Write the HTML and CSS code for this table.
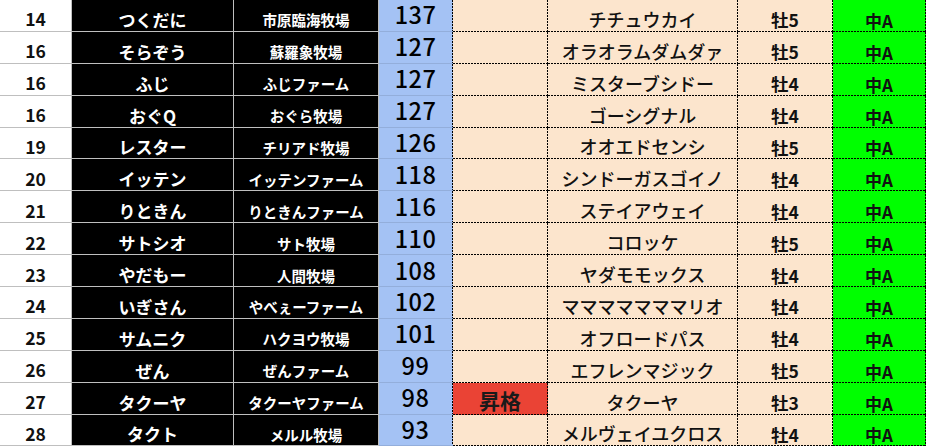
FILE: index.html
```html
<!DOCTYPE html>
<html lang="ja">
<head>
<meta charset="utf-8">
<title>ランキング</title>
<link rel="stylesheet" href="styles.css">
</head>
<body>
<div class="sheet">
  <div class="row"><div class="c rank">14</div><div class="c name">つくだに</div><div class="c farm">市原臨海牧場</div><div class="c pt">137</div><div class="c d note"></div><div class="c d horse">チチュウカイ</div><div class="c d sex">牡5</div><div class="c d cls">中A</div></div>
  <div class="row"><div class="c rank">16</div><div class="c name">そらぞう</div><div class="c farm">蘇羅象牧場</div><div class="c pt">127</div><div class="c d note"></div><div class="c d horse">オラオラムダムダァ</div><div class="c d sex">牡5</div><div class="c d cls">中A</div></div>
  <div class="row"><div class="c rank">16</div><div class="c name">ふじ</div><div class="c farm">ふじファーム</div><div class="c pt">127</div><div class="c d note"></div><div class="c d horse">ミスターブシドー</div><div class="c d sex">牡4</div><div class="c d cls">中A</div></div>
  <div class="row"><div class="c rank">16</div><div class="c name">おぐQ</div><div class="c farm">おぐら牧場</div><div class="c pt">127</div><div class="c d note"></div><div class="c d horse">ゴーシグナル</div><div class="c d sex">牡4</div><div class="c d cls">中A</div></div>
  <div class="row"><div class="c rank">19</div><div class="c name">レスター</div><div class="c farm">チリアド牧場</div><div class="c pt">126</div><div class="c d note"></div><div class="c d horse">オオエドセンシ</div><div class="c d sex">牡5</div><div class="c d cls">中A</div></div>
  <div class="row"><div class="c rank">20</div><div class="c name">イッテン</div><div class="c farm">イッテンファーム</div><div class="c pt">118</div><div class="c d note"></div><div class="c d horse">シンドーガスゴイノ</div><div class="c d sex">牡4</div><div class="c d cls">中A</div></div>
  <div class="row"><div class="c rank">21</div><div class="c name">りときん</div><div class="c farm">りときんファーム</div><div class="c pt">116</div><div class="c d note"></div><div class="c d horse">ステイアウェイ</div><div class="c d sex">牡4</div><div class="c d cls">中A</div></div>
  <div class="row"><div class="c rank">22</div><div class="c name">サトシオ</div><div class="c farm">サト牧場</div><div class="c pt">110</div><div class="c d note"></div><div class="c d horse">コロッケ</div><div class="c d sex">牡5</div><div class="c d cls">中A</div></div>
  <div class="row"><div class="c rank">23</div><div class="c name">やだもー</div><div class="c farm">人間牧場</div><div class="c pt">108</div><div class="c d note"></div><div class="c d horse">ヤダモモックス</div><div class="c d sex">牡4</div><div class="c d cls">中A</div></div>
  <div class="row"><div class="c rank">24</div><div class="c name">いぎさん</div><div class="c farm">やべぇーファーム</div><div class="c pt">102</div><div class="c d note"></div><div class="c d horse">マママママママリオ</div><div class="c d sex">牡4</div><div class="c d cls">中A</div></div>
  <div class="row"><div class="c rank">25</div><div class="c name">サムニク</div><div class="c farm">ハクヨウ牧場</div><div class="c pt">101</div><div class="c d note"></div><div class="c d horse">オフロードパス</div><div class="c d sex">牡4</div><div class="c d cls">中A</div></div>
  <div class="row"><div class="c rank">26</div><div class="c name">ぜん</div><div class="c farm">ぜんファーム</div><div class="c pt">99</div><div class="c d note"></div><div class="c d horse">エフレンマジック</div><div class="c d sex">牡5</div><div class="c d cls">中A</div></div>
  <div class="row"><div class="c rank">27</div><div class="c name">タクーヤ</div><div class="c farm">タクーヤファーム</div><div class="c pt">98</div><div class="c d note up">昇格</div><div class="c d horse">タクーヤ</div><div class="c d sex">牡3</div><div class="c d cls">中A</div></div>
  <div class="row"><div class="c rank">28</div><div class="c name">タクト</div><div class="c farm">メルル牧場</div><div class="c pt">93</div><div class="c d note"></div><div class="c d horse">メルヴェイユクロス</div><div class="c d sex">牡4</div><div class="c d cls">中A</div></div>
</div>
</body>
</html>
```

FILE: styles.css
```css
html, body {
  margin: 0;
  padding: 0;
  background: #ffffff;
}

body {
  font-family: "Noto Sans CJK JP", sans-serif;
  overflow: hidden;
}

.sheet {
  display: flex;
  flex-direction: column;
  width: 927px;
}

.row {
  display: grid;
  grid-template-columns: 72px 162px 145px 74px 95px 190px 95px 93px;
  height: 31.9px;
}

.c {
  box-sizing: border-box;
  display: flex;
  align-items: flex-end;
  justify-content: center;
  line-height: 1;
  white-space: nowrap;
  padding-bottom: 3px;
  border-right: 1px solid #bfbfbf;
  border-bottom: 1px solid #bfbfbf;
}

.rank {
  background: #ffffff;
  color: #111111;
  font-size: 17.5px;
  font-weight: 700;
}

.name {
  background: #000000;
  color: #ffffff;
  font-size: 17px;
  font-weight: 700;
}

.farm {
  background: #000000;
  color: #ffffff;
  font-size: 14.5px;
  font-weight: 700;
}

.pt {
  border-right: none;
  border-bottom: 1px solid #93aedb;
  background-color: #a4c2f4;
  background-image: repeating-linear-gradient(to bottom, #000000 0 2px, transparent 2px 3px);
  background-size: 1px 100%;
  background-position: right top;
  background-repeat: no-repeat;
  color: #000000;
  font-size: 23.5px;
  font-weight: 500;
  letter-spacing: 0.5px;
  padding-bottom: 4px;
  padding-right: 1px;
}

.d {
  border: none;
  background-color: #fce5cd;
  background-image:
    repeating-linear-gradient(to bottom, #000000 0 2px, transparent 2px 3px),
    repeating-linear-gradient(to right, #000000 0 2px, transparent 2px 3px);
  background-size: 1px 100%, 100% 1px;
  background-position: right top, left bottom;
  background-repeat: no-repeat;
  padding-right: 1px;
}

.note {
  font-size: 21px;
  font-weight: 700;
  color: #1a1a1a;
  padding-bottom: 4px;
}

.note.up {
  background-color: #ea4335;
}

.horse {
  font-size: 18px;
  font-weight: 500;
  color: #111111;
  padding-bottom: 4px;
}

.sex {
  font-size: 17.5px;
  font-weight: 700;
  color: #111111;
}

.cls {
  background-color: #00ff00;
  font-size: 17px;
  font-weight: 700;
  color: #111111;
}
```
